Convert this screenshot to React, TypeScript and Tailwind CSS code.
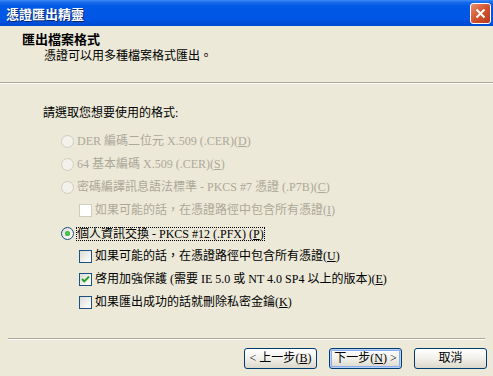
import React from "react";

const K = ({ k }: { k: string }) => (
  <>
    (<span className="underline">{k}</span>)
  </>
);

function Radio({ checked, disabled }: { checked?: boolean; disabled?: boolean }) {
  if (disabled) {
    return <span className="h-[13px] w-[13px] shrink-0 rounded-full border border-[#CFCDC0] bg-[#F3F2EA]" />;
  }
  return (
    <span className="flex h-[13px] w-[13px] shrink-0 items-center justify-center rounded-full border border-[#1C5180] bg-gradient-to-br from-[#DCDCD7] to-white">
      {checked && <span className="h-[5px] w-[5px] rounded-full bg-[radial-gradient(circle,#5BD75B,#1E9A1E)]" />}
    </span>
  );
}

function Check({ checked, disabled }: { checked?: boolean; disabled?: boolean }) {
  if (disabled) {
    return <span className="h-[13px] w-[13px] shrink-0 border border-[#CFCDC0] bg-white" />;
  }
  return (
    <span className="flex h-[13px] w-[13px] shrink-0 items-center justify-center border border-[#1C5180] bg-gradient-to-br from-[#DCDCD7] to-white">
      {checked && (
        <svg width="11" height="11" viewBox="0 0 11 11">
          <path d="M2 5 L4.3 7.4 L9 2.6" fill="none" stroke="#21A121" strokeWidth="2" />
        </svg>
      )}
    </span>
  );
}

function Button({ children, primary }: { children: React.ReactNode; primary?: boolean }) {
  return (
    <div
      className={
        primary
          ? "flex h-[21px] w-[73px] items-center justify-center rounded-[3px] border border-[#003C74] bg-gradient-to-b from-white via-[#F1F0EA] to-[#DCD8CB] text-black shadow-[inset_0_0_0_1px_#B9D1F6,inset_0_0_0_2px_#8BAEEA]"
          : "flex h-[21px] w-[73px] items-center justify-center rounded-[3px] border border-[#003C74] bg-gradient-to-b from-white via-[#F1F0EA] to-[#DCD8CB] text-black"
      }
    >
      {children}
    </div>
  );
}

export default function App() {
  return (
    <div className="flex h-[376px] w-[493px] flex-col overflow-hidden bg-[#ECE9D8] font-['Liberation_Serif','Noto_Sans_CJK_TC',serif] text-[12px] leading-[13px] text-black">
      {/* title bar */}
      <div className="flex h-[26px] shrink-0 items-center justify-between bg-[linear-gradient(to_bottom,#3A8CF6_0%,#1768EA_10%,#0058E6_25%,#0055E5_75%,#0049CE_100%)] pl-[6px] pr-[2px]">
        <span className="font-['Noto_Sans_CJK_TC',sans-serif] text-[13px] font-bold text-white [text-shadow:1px_1px_0_#0A246A]">
          憑證匯出精靈
        </span>
        <div className="flex h-[21px] w-[21px] items-center justify-center rounded-[3px] border border-white bg-[linear-gradient(135deg,#E98E6E,#D2542E_50%,#B8381A)]">
          <svg width="11" height="11" viewBox="0 0 11 11">
            <path d="M1.5 1.5 L9.5 9.5 M9.5 1.5 L1.5 9.5" stroke="white" strokeWidth="2" />
          </svg>
        </div>
      </div>

      {/* header */}
      <div className="flex h-[56px] shrink-0 flex-col pt-[6px]">
        <div className="h-[14px] pl-[22px] font-['Noto_Sans_CJK_TC',sans-serif] text-[13px] font-bold leading-[14px]">
          匯出檔案格式
        </div>
        <div className="mt-[3px] h-[14px] pl-[44px] leading-[14px]">憑證可以用多種檔案格式匯出。</div>
      </div>
      <div className="h-px shrink-0 bg-[#ACA899]" />
      <div className="h-px shrink-0 bg-white" />

      {/* body */}
      <div className="mt-[17px] flex h-[24px] items-center pl-[43px]">請選取您想要使用的格式:</div>
      <div className="mt-[5px] flex flex-col">
        <div className="flex h-[23px] items-center gap-[3px] pl-[61px] text-[#ACA899]">
          <Radio disabled />
          <span>DER 編碼二位元 X.509 (.CER)<K k="D" /></span>
        </div>
        <div className="flex h-[23px] items-center gap-[3px] pl-[61px] text-[#ACA899]">
          <Radio disabled />
          <span>64 基本編碼 X.509 (.CER)<K k="S" /></span>
        </div>
        <div className="flex h-[23px] items-center gap-[3px] pl-[61px] text-[#ACA899]">
          <Radio disabled />
          <span>密碼編譯訊息語法標準 - PKCS #7 憑證 (.P7B)<K k="C" /></span>
        </div>
        <div className="flex h-[23px] items-center gap-[3px] pl-[79px] text-[#ACA899]">
          <Check disabled />
          <span>如果可能的話，在憑證路徑中包含所有憑證<K k="I" /></span>
        </div>
        <div className="flex h-[23px] items-center gap-[2px] pl-[61px]">
          <Radio checked />
          <span className="border border-dotted border-black leading-[12px]">
            個人資訊交換 - PKCS #12 (.PFX) <K k="P" />
          </span>
        </div>
        <div className="flex h-[23px] items-center gap-[3px] pl-[79px]">
          <Check />
          <span>如果可能的話，在憑證路徑中包含所有憑證<K k="U" /></span>
        </div>
        <div className="flex h-[23px] items-center gap-[3px] pl-[79px]">
          <Check checked />
          <span>啓用加強保護 (需要 IE 5.0 或 NT 4.0 SP4 以上的版本)<K k="E" /></span>
        </div>
        <div className="flex h-[23px] items-center gap-[3px] pl-[79px]">
          <Check />
          <span>如果匯出成功的話就刪除私密金鑰<K k="K" /></span>
        </div>
      </div>

      {/* footer */}
      <div className="mx-[8px] mt-[24px] h-px bg-[#ACA899]" />
      <div className="mx-[8px] h-px bg-white" />
      <div className="mt-[8px] flex justify-end gap-[12px] pr-[6px]">
        <Button>&lt; 上一步<K k="B" /></Button>
        <Button primary>下一步<K k="N" /> &gt;</Button>
        <Button>取消</Button>
      </div>
    </div>
  );
}
